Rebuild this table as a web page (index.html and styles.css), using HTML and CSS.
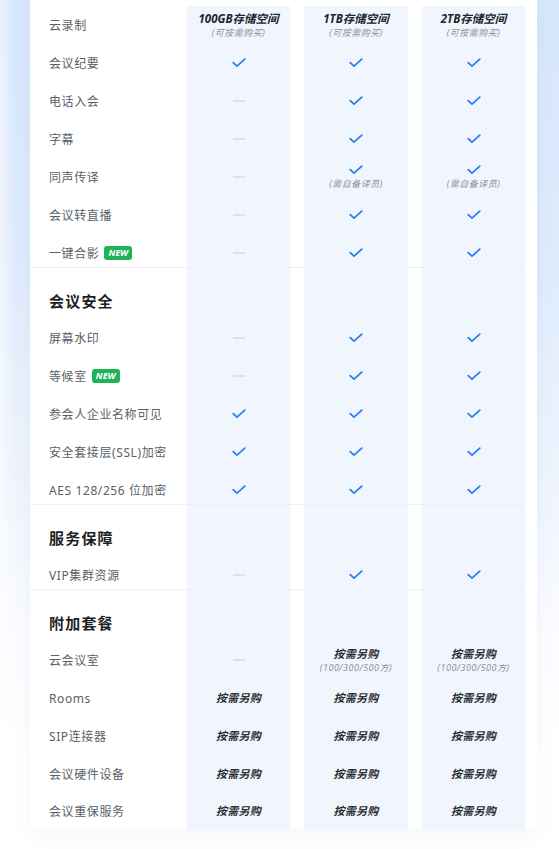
FILE: index.html
```
<!DOCTYPE html>
<html lang="zh-CN">
<head>
<meta charset="utf-8">
<title>功能对比</title>
<link rel="stylesheet" href="styles.css">
</head>
<body>
<div class="page">
  <div class="card">
    <div class="grid">
      <div class="row">
        <div class="c label">云录制</div>
        <div class="c col"><span class="hd">100GB存储空间</span><span class="note">(可按需购买)</span></div>
        <div class="c col"><span class="hd">1TB存储空间</span><span class="note">(可按需购买)</span></div>
        <div class="c col"><span class="hd">2TB存储空间</span><span class="note">(可按需购买)</span></div>
      </div>
      <div class="row">
        <div class="c label">会议纪要</div>
        <div class="c col"><svg class="ck" viewBox="0 0 14 10"><polyline points="1.2,4.6 5,8.2 12.8,1.2"/></svg></div>
        <div class="c col"><svg class="ck" viewBox="0 0 14 10"><polyline points="1.2,4.6 5,8.2 12.8,1.2"/></svg></div>
        <div class="c col"><svg class="ck" viewBox="0 0 14 10"><polyline points="1.2,4.6 5,8.2 12.8,1.2"/></svg></div>
      </div>
      <div class="row">
        <div class="c label">电话入会</div>
        <div class="c col"><span class="dash"></span></div>
        <div class="c col"><svg class="ck" viewBox="0 0 14 10"><polyline points="1.2,4.6 5,8.2 12.8,1.2"/></svg></div>
        <div class="c col"><svg class="ck" viewBox="0 0 14 10"><polyline points="1.2,4.6 5,8.2 12.8,1.2"/></svg></div>
      </div>
      <div class="row">
        <div class="c label">字幕</div>
        <div class="c col"><span class="dash"></span></div>
        <div class="c col"><svg class="ck" viewBox="0 0 14 10"><polyline points="1.2,4.6 5,8.2 12.8,1.2"/></svg></div>
        <div class="c col"><svg class="ck" viewBox="0 0 14 10"><polyline points="1.2,4.6 5,8.2 12.8,1.2"/></svg></div>
      </div>
      <div class="row">
        <div class="c label">同声传译</div>
        <div class="c col"><span class="dash"></span></div>
        <div class="c col stack"><svg class="ck" viewBox="0 0 14 10"><polyline points="1.2,4.6 5,8.2 12.8,1.2"/></svg><span class="note">(需自备译员)</span></div>
        <div class="c col stack"><svg class="ck" viewBox="0 0 14 10"><polyline points="1.2,4.6 5,8.2 12.8,1.2"/></svg><span class="note">(需自备译员)</span></div>
      </div>
      <div class="row">
        <div class="c label">会议转直播</div>
        <div class="c col"><span class="dash"></span></div>
        <div class="c col"><svg class="ck" viewBox="0 0 14 10"><polyline points="1.2,4.6 5,8.2 12.8,1.2"/></svg></div>
        <div class="c col"><svg class="ck" viewBox="0 0 14 10"><polyline points="1.2,4.6 5,8.2 12.8,1.2"/></svg></div>
      </div>
      <div class="row end">
        <div class="c label">一键合影<span class="new">NEW</span></div>
        <div class="c col"><span class="dash"></span></div>
        <div class="c col"><svg class="ck" viewBox="0 0 14 10"><polyline points="1.2,4.6 5,8.2 12.8,1.2"/></svg></div>
        <div class="c col"><svg class="ck" viewBox="0 0 14 10"><polyline points="1.2,4.6 5,8.2 12.8,1.2"/></svg></div>
      </div>
      <div class="sep"></div>

      <div class="row head">
        <div class="c label"><h3>会议安全</h3></div>
        <div class="c col"></div><div class="c col"></div><div class="c col"></div>
      </div>
      <div class="row">
        <div class="c label">屏幕水印</div>
        <div class="c col"><span class="dash"></span></div>
        <div class="c col"><svg class="ck" viewBox="0 0 14 10"><polyline points="1.2,4.6 5,8.2 12.8,1.2"/></svg></div>
        <div class="c col"><svg class="ck" viewBox="0 0 14 10"><polyline points="1.2,4.6 5,8.2 12.8,1.2"/></svg></div>
      </div>
      <div class="row">
        <div class="c label">等候室<span class="new">NEW</span></div>
        <div class="c col"><span class="dash"></span></div>
        <div class="c col"><svg class="ck" viewBox="0 0 14 10"><polyline points="1.2,4.6 5,8.2 12.8,1.2"/></svg></div>
        <div class="c col"><svg class="ck" viewBox="0 0 14 10"><polyline points="1.2,4.6 5,8.2 12.8,1.2"/></svg></div>
      </div>
      <div class="row">
        <div class="c label">参会人企业名称可见</div>
        <div class="c col"><svg class="ck" viewBox="0 0 14 10"><polyline points="1.2,4.6 5,8.2 12.8,1.2"/></svg></div>
        <div class="c col"><svg class="ck" viewBox="0 0 14 10"><polyline points="1.2,4.6 5,8.2 12.8,1.2"/></svg></div>
        <div class="c col"><svg class="ck" viewBox="0 0 14 10"><polyline points="1.2,4.6 5,8.2 12.8,1.2"/></svg></div>
      </div>
      <div class="row">
        <div class="c label">安全套接层(SSL)加密</div>
        <div class="c col"><svg class="ck" viewBox="0 0 14 10"><polyline points="1.2,4.6 5,8.2 12.8,1.2"/></svg></div>
        <div class="c col"><svg class="ck" viewBox="0 0 14 10"><polyline points="1.2,4.6 5,8.2 12.8,1.2"/></svg></div>
        <div class="c col"><svg class="ck" viewBox="0 0 14 10"><polyline points="1.2,4.6 5,8.2 12.8,1.2"/></svg></div>
      </div>
      <div class="row end">
        <div class="c label">AES 128/256 位加密</div>
        <div class="c col"><svg class="ck" viewBox="0 0 14 10"><polyline points="1.2,4.6 5,8.2 12.8,1.2"/></svg></div>
        <div class="c col"><svg class="ck" viewBox="0 0 14 10"><polyline points="1.2,4.6 5,8.2 12.8,1.2"/></svg></div>
        <div class="c col"><svg class="ck" viewBox="0 0 14 10"><polyline points="1.2,4.6 5,8.2 12.8,1.2"/></svg></div>
      </div>
      <div class="sep"></div>

      <div class="row head">
        <div class="c label"><h3>服务保障</h3></div>
        <div class="c col"></div><div class="c col"></div><div class="c col"></div>
      </div>
      <div class="row end">
        <div class="c label">VIP集群资源</div>
        <div class="c col"><span class="dash"></span></div>
        <div class="c col"><svg class="ck" viewBox="0 0 14 10"><polyline points="1.2,4.6 5,8.2 12.8,1.2"/></svg></div>
        <div class="c col"><svg class="ck" viewBox="0 0 14 10"><polyline points="1.2,4.6 5,8.2 12.8,1.2"/></svg></div>
      </div>
      <div class="sep"></div>

      <div class="row head">
        <div class="c label"><h3>附加套餐</h3></div>
        <div class="c col"></div><div class="c col"></div><div class="c col"></div>
      </div>
      <div class="row">
        <div class="c label">云会议室</div>
        <div class="c col"><span class="dash"></span></div>
        <div class="c col"><span class="val">按需另购</span><span class="note">(100/300/500方)</span></div>
        <div class="c col"><span class="val">按需另购</span><span class="note">(100/300/500方)</span></div>
      </div>
      <div class="row">
        <div class="c label">Rooms</div>
        <div class="c col"><span class="val">按需另购</span></div>
        <div class="c col"><span class="val">按需另购</span></div>
        <div class="c col"><span class="val">按需另购</span></div>
      </div>
      <div class="row">
        <div class="c label">SIP连接器</div>
        <div class="c col"><span class="val">按需另购</span></div>
        <div class="c col"><span class="val">按需另购</span></div>
        <div class="c col"><span class="val">按需另购</span></div>
      </div>
      <div class="row">
        <div class="c label">会议硬件设备</div>
        <div class="c col"><span class="val">按需另购</span></div>
        <div class="c col"><span class="val">按需另购</span></div>
        <div class="c col"><span class="val">按需另购</span></div>
      </div>
      <div class="row last">
        <div class="c label">会议重保服务</div>
        <div class="c col"><span class="val">按需另购</span></div>
        <div class="c col"><span class="val">按需另购</span></div>
        <div class="c col"><span class="val">按需另购</span></div>
      </div>
    </div>
  </div>
</div>
</body>
</html>
```
FILE: styles.css
```
html, body {
  margin: 0;
  padding: 0;
}
body {
  width: 559px;
  height: 849px;
  overflow: hidden;
  font-family: "Noto Sans", "Noto Sans CJK SC", sans-serif;
  background:
    linear-gradient(to right, rgba(255,255,255,0.55) 0, rgba(255,255,255,0) 14px),
    linear-gradient(to bottom, #d6e6fc 0, #deebfc 260px, #eef4fd 480px, #fbfcff 640px, #ffffff 760px);
}
.page {
  padding: 0 22px 0 30px;
}
.card {
  background: #ffffff;
  width: 507px;
  padding: 6px 12px 0 0;
  box-sizing: border-box;
  box-shadow: 0 6px 18px rgba(60, 110, 190, 0.06);
}
.grid {
  display: grid;
  grid-template-columns: 143px 103px 104px 103px;
  column-gap: 14px;
}
.row {
  display: contents;
}
.c {
  height: 38px;
  box-sizing: border-box;
  display: flex;
  flex-direction: column;
  align-items: center;
  justify-content: center;
}
.row.end .c {
  height: 33px;
  padding-top: 5px;
}
.row.head .c {
  height: 51px;
  padding-top: 13px;
}
.row.last .c {
  height: 36px;
}
.col {
  background: #f1f6fe;
}
.label {
  flex-direction: row;
  justify-content: flex-start;
  padding-left: 19px;
  font-size: 12px;
  letter-spacing: 0.6px;
  color: #5a5f68;
  white-space: nowrap;
}
.label h3 {
  margin: 0;
  font-size: 15px;
  font-weight: 700;
  letter-spacing: 1.2px;
  color: #1c1f24;
}
.new {
  display: inline-block;
  margin-left: 5px;
  height: 14px;
  line-height: 14px;
  padding: 0 4px;
  border-radius: 3px;
  background: #1fb257;
  color: #ffffff;
  font-size: 9px;
  font-weight: 700;
  font-style: italic;
  letter-spacing: 0;
}
.hd {
  display: block;
  font-size: 11.5px;
  font-weight: 700;
  font-style: italic;
  color: #22252a;
  line-height: 14px;
  white-space: nowrap;
}
.hd + .note {
  margin-top: 1px;
}
.note {
  display: block;
  font-size: 9px;
  font-style: italic;
  color: #8c929b;
  line-height: 12px;
  letter-spacing: 0.5px;
  white-space: nowrap;
}
.val {
  display: block;
  font-size: 11px;
  font-weight: 700;
  font-style: italic;
  color: #2b2e33;
  line-height: 14px;
  letter-spacing: 0.3px;
}
.val + .note {
  margin-top: 1px;
}
.stack .ck {
  margin-bottom: 3px;
}
.ck {
  width: 14px;
  height: 10px;
  fill: none;
  stroke: #2a80ec;
  stroke-width: 1.8;
  stroke-linecap: round;
  stroke-linejoin: round;
}
.dash {
  display: block;
  width: 12px;
  height: 1.5px;
  background: #dde1e8;
}
.sep {
  grid-column: 1 / -1;
  height: 1px;
  background: #eaf0f8;
}
```
